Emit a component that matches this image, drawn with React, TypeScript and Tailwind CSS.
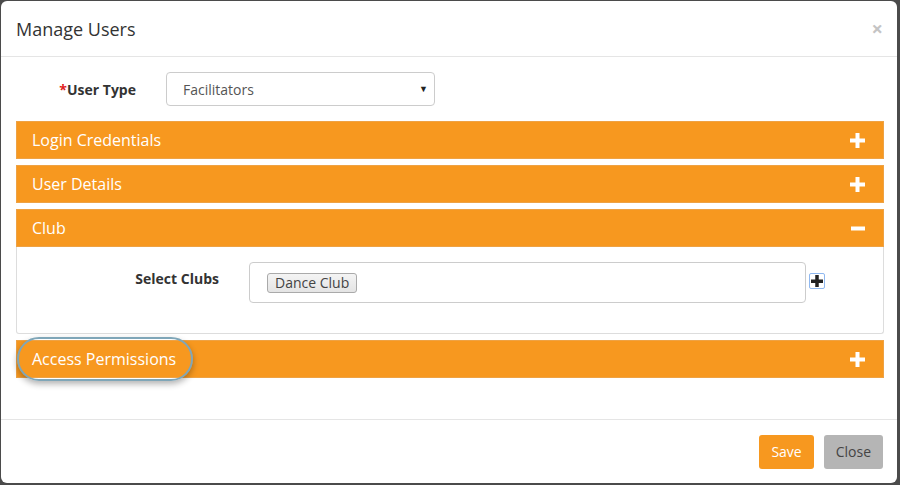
const PANELS_TOP = [
  { key: "login", label: "Login Credentials" },
  { key: "details", label: "User Details" },
];

function PlusIcon({ className = "" }: { className?: string }) {
  return (
    <svg width="15" height="15" viewBox="0 0 15 15" className={className} aria-hidden="true">
      <rect x="0" y="5.5" width="15" height="4" fill="currentColor" />
      <rect x="5.5" y="0" width="4" height="15" fill="currentColor" />
    </svg>
  );
}

function MinusIcon() {
  return (
    <svg width="14" height="15" viewBox="0 0 14 15" aria-hidden="true">
      <rect x="0" y="5.5" width="14" height="4" fill="currentColor" />
    </svg>
  );
}

function PanelHeader({ label, open, focused }: { label: string; open?: boolean; focused?: boolean }) {
  return (
    <div className="flex h-[38px] items-center justify-between border border-[#eea244] bg-[#f7981f] pl-[15px] pr-[18px] text-white">
      {focused ? (
        <span className="-my-[4px] -ml-[15px] rounded-[22px] border-2 border-[#7fa6b8] py-[9px] pl-[13px] pr-[15px] text-[16px] leading-[22px] shadow-[0_3px_6px_rgba(0,0,0,0.3)]">
          {label}
        </span>
      ) : (
        <span className="text-[16px] leading-[22px]">{label}</span>
      )}
      {open ? <MinusIcon /> : <PlusIcon />}
    </div>
  );
}

export default function App() {
  return (
    <div className="h-[485px] w-[900px] bg-[#4b4b4b] pl-px pt-px font-['Open_Sans',sans-serif] text-[#333]">
      <div className="flex h-[482px] w-[896px] flex-col rounded-[6px] bg-white">
        <header className="flex h-[56px] items-center justify-between border-b border-[#e5e5e5] pl-[15px] pr-[14px]">
          <h1 className="text-[18px] leading-[24px] text-[#333]">Manage Users</h1>
          <span className="text-[20px] font-bold leading-none text-[#c4c4c4]">×</span>
        </header>

        <div className="flex-1 pl-[15px] pr-[13px] pt-[15px]">
          <div className="flex items-center">
            <label className="w-[120px] text-right text-[14px] font-bold">
              <span className="text-[#e02020]">*</span>User Type
            </label>
            <div className="ml-[30px] flex h-[34px] w-[269px] items-center justify-between rounded-[4px] border border-[#ccc] pl-[16px] pr-[6px] text-[14px] text-[#555]">
              <span>Facilitators</span>
              <span className="text-[9px] text-[#222]">▼</span>
            </div>
          </div>

          <div className="mt-[15px] flex flex-col gap-[6px]">
            {PANELS_TOP.map((p) => (
              <PanelHeader key={p.key} label={p.label} />
            ))}
            <div>
              <PanelHeader label="Club" open />
              <div className="flex h-[87px] items-start rounded-b-[3px] border-x border-b border-[#ddd] pt-[15px]">
                <label className="mt-[6px] w-[202px] text-right text-[14px] font-bold">Select Clubs</label>
                <div className="ml-[30px] flex h-[41px] w-[557px] items-center rounded-[4px] border border-[#ccc] px-[17px]">
                  <span className="rounded-[3px] border border-[#aaa] bg-[linear-gradient(#f4f4f4,#e4e4e4)] px-[7px] text-[14px] leading-[18px] text-[#444]">
                    Dance Club
                  </span>
                </div>
                <div className="ml-[3px] mt-[11px] flex h-[16px] w-[16px] items-center justify-center rounded-[2px] border border-[#8fb8f0] bg-white text-[#222]">
                  <svg width="12" height="12" viewBox="0 0 12 12" aria-hidden="true">
                    <rect x="0" y="4.5" width="12" height="3.5" fill="currentColor" />
                    <rect x="4.25" y="0" width="3.5" height="12" fill="currentColor" />
                  </svg>
                </div>
              </div>
            </div>
            <PanelHeader label="Access Permissions" focused />
          </div>
        </div>

        <footer className="flex h-[64px] items-center justify-end gap-[10px] border-t border-[#e5e5e5] pr-[14px]">
          <button className="h-[34px] rounded-[3px] bg-[#f7981f] px-[12px] text-[14px] text-white">Save</button>
          <button className="h-[34px] rounded-[3px] bg-[#b5b5b5] px-[12px] text-[14px] text-[#444]">Close</button>
        </footer>
      </div>
    </div>
  );
}
